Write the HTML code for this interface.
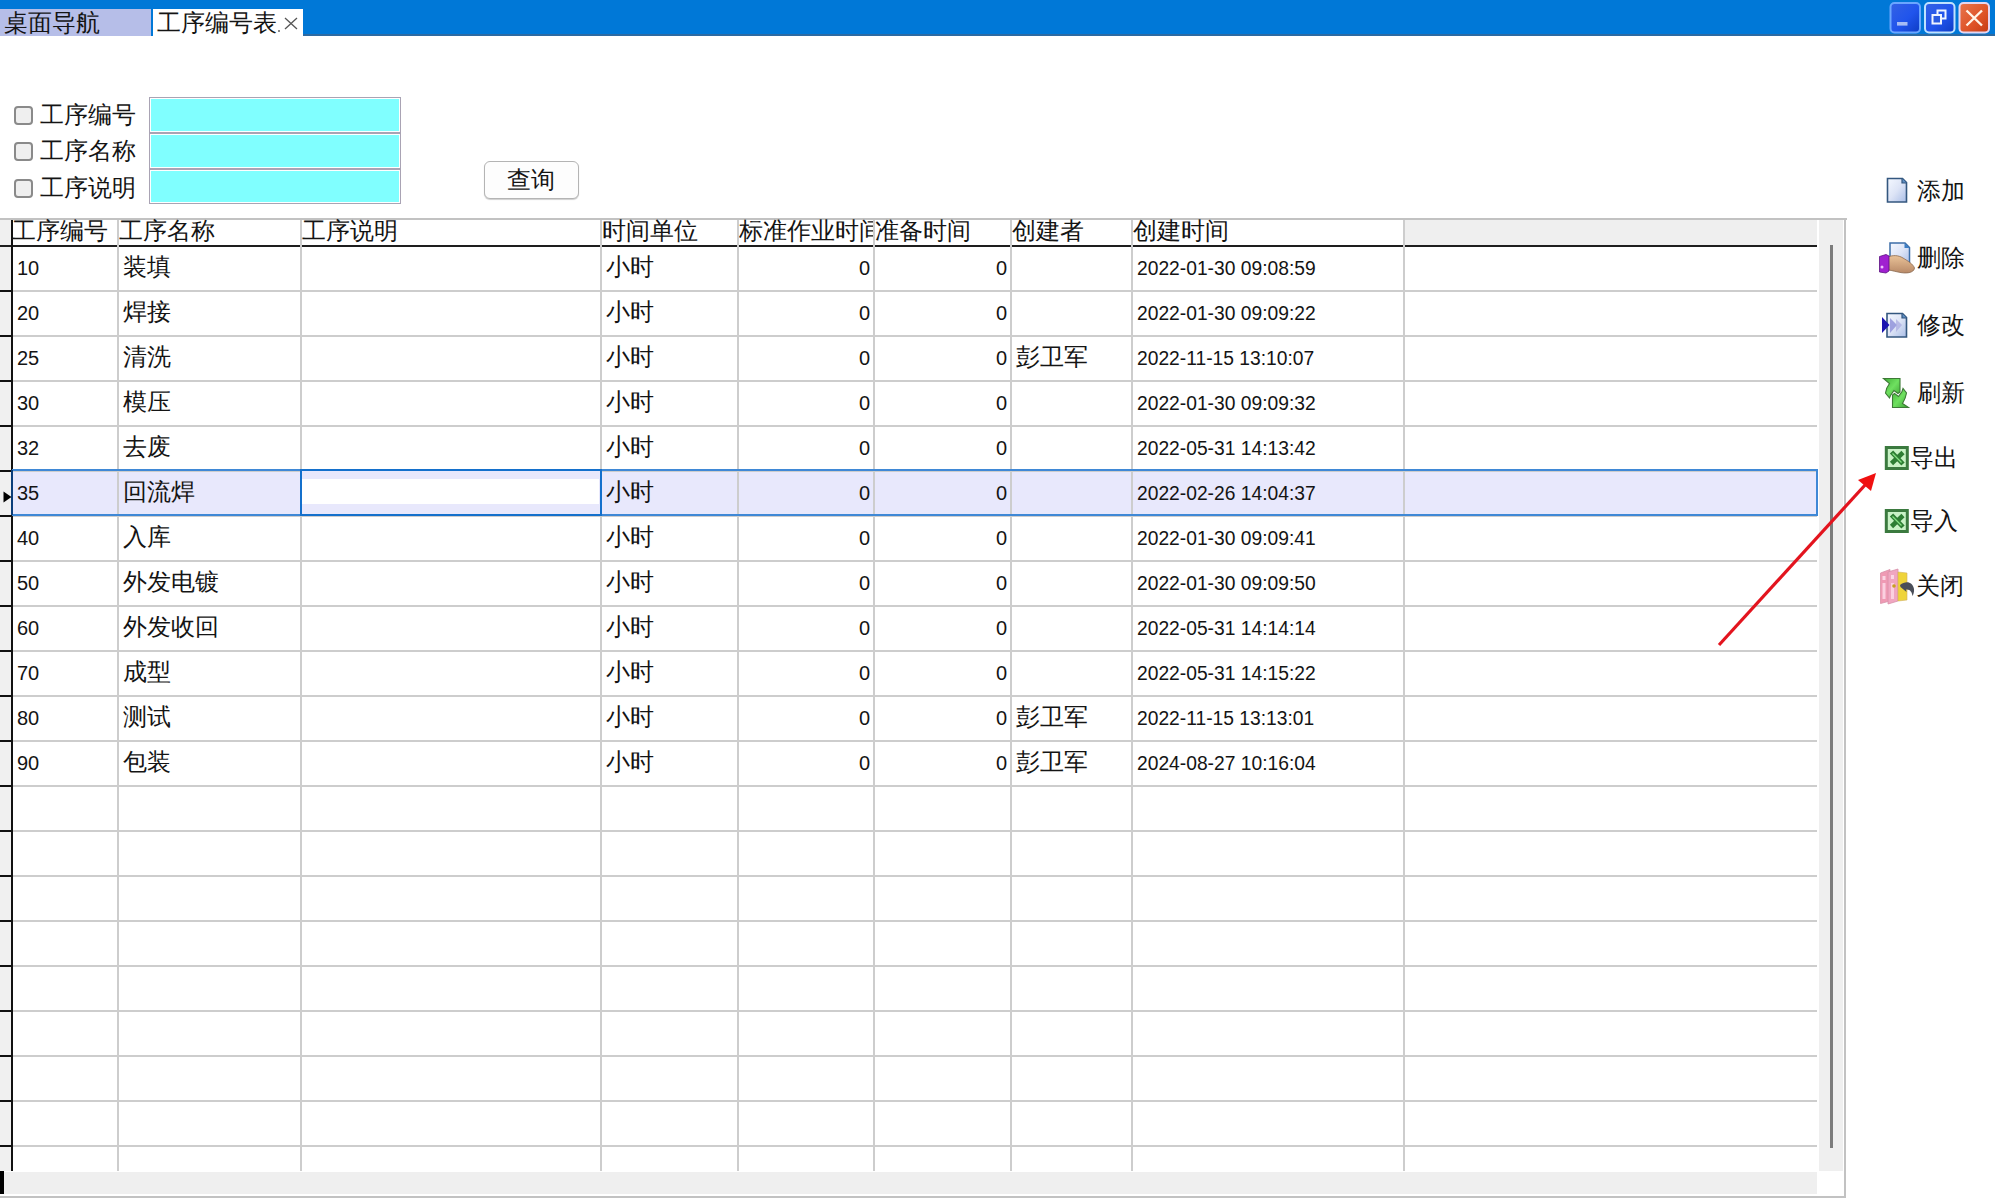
<!DOCTYPE html>
<html><head><meta charset="utf-8"><title>工序编号表</title>
<style>
*{box-sizing:border-box}
html,body{margin:0;padding:0;width:1995px;height:1200px;overflow:hidden;background:#fff}
body{position:relative;font-family:"Liberation Sans",sans-serif;color:#111}
.a{position:absolute}
.cj{font-size:24px;line-height:27px;white-space:nowrap;color:#141414}
.num{font-size:20px;line-height:27px;white-space:nowrap;color:#141414}
.hl{position:absolute;height:2px;background:#cdcdcd}
.dt{transform:scaleX(0.962);transform-origin:0 0}
.vl{position:absolute;width:2px;background:#cdcdcd}
</style></head><body>

<div class="a" style="left:0;top:0;width:1995px;height:36px;background:#0078d7"></div>
<div class="a" style="left:303px;top:34px;width:1692px;height:2px;background:#2d6aa2"></div>
<div class="a" style="left:0;top:9px;width:151px;height:27px;background:#b6bee8"></div>
<div class="a cj" style="left:4px;top:9px">桌面导航</div>
<div class="a" style="left:153px;top:9px;width:150px;height:28px;background:#fff"></div>
<div class="a cj" style="left:157px;top:9px">工序编号表</div>
<div class="a" style="left:278px;top:30px;width:2px;height:2px;background:#888"></div>
<svg class="a" style="left:284px;top:17px" width="14" height="13" viewBox="0 0 14 13"><path d="M1 1L13 12M13 1L1 12" stroke="#555" stroke-width="1.3" fill="none"/></svg>
<svg class="a" style="left:1885px;top:0px" width="110" height="36" viewBox="1885 0 110 36">
<defs>
<linearGradient id="gb" x1="0" y1="0" x2="1" y2="1"><stop offset="0" stop-color="#3462e4"/><stop offset="0.55" stop-color="#2054ec"/><stop offset="1" stop-color="#0d3cc4"/></linearGradient>
<linearGradient id="gr" x1="0" y1="0" x2="1" y2="1"><stop offset="0" stop-color="#e8764e"/><stop offset="0.6" stop-color="#de5226"/><stop offset="1" stop-color="#c43a12"/></linearGradient>
</defs>
<rect x="1890.5" y="3" width="29.5" height="29.5" rx="4" fill="url(#gb)" stroke="#6aa6ff" stroke-width="2"/>
<rect x="1897" y="22" width="10.5" height="3.6" fill="#a6bcf4"/>
<rect x="1925" y="3" width="29.5" height="29.5" rx="4" fill="url(#gb)" stroke="#bfe2ff" stroke-width="2"/>
<path d="M1937.5 14V10.5H1945.5V18.5H1941.5" fill="none" stroke="#eef4ff" stroke-width="2"/>
<rect x="1932.5" y="15" width="8.5" height="8.5" fill="#2a5ae0" stroke="#eef4ff" stroke-width="2"/>
<rect x="1959.5" y="3" width="29.5" height="29.5" rx="4" fill="url(#gr)" stroke="#e6d6f0" stroke-width="2"/>
<path d="M1966.5 10.5L1982 25.5M1982 10.5L1966.5 25.5" stroke="#fff4e8" stroke-width="2.4"/>
</svg>
<div class="a" style="left:14px;top:106px;width:19px;height:19px;border:2px solid #8a8a8a;border-radius:4px;background:#efefef"></div>
<div class="a cj" style="left:40px;top:101px">工序编号</div>
<div class="a" style="left:14px;top:142px;width:19px;height:19px;border:2px solid #8a8a8a;border-radius:4px;background:#efefef"></div>
<div class="a cj" style="left:40px;top:137px">工序名称</div>
<div class="a" style="left:14px;top:179px;width:19px;height:19px;border:2px solid #8a8a8a;border-radius:4px;background:#efefef"></div>
<div class="a cj" style="left:40px;top:174px">工序说明</div>
<div class="a" style="left:149px;top:97px;width:252px;height:36px;border:1px solid #a9a3b4;background:#80ffff;box-shadow:inset 0 0 0 1px #fff"></div>
<div class="a" style="left:149px;top:133px;width:252px;height:36px;border:1px solid #a9a3b4;background:#80ffff;box-shadow:inset 0 0 0 1px #fff"></div>
<div class="a" style="left:149px;top:169px;width:252px;height:35px;border:1px solid #a9a3b4;background:#80ffff;box-shadow:inset 0 0 0 1px #fff"></div>
<div class="a" style="left:484px;top:161px;width:95px;height:38px;border:1px solid #b4b4b4;border-radius:6px;background:#fdfdfd;box-shadow:0 1px 1px #cfcfcf"></div>
<div class="a cj" style="left:507px;top:166px">查询</div>
<div class="a" style="left:0;top:218px;width:1847px;height:2px;background:#c2c2c2"></div>
<div class="a" style="left:1844px;top:218px;width:2px;height:980px;background:#c2c2c2"></div>
<div class="a" style="left:0;top:1196px;width:1846px;height:2px;background:#c2c2c2"></div>
<div class="a" style="left:0;top:220px;width:11px;height:951px;background:#f0f0f0"></div>
<div class="a" style="left:1405px;top:220px;width:412px;height:25px;background:#efefef"></div>
<div class="a" style="left:1819px;top:220px;width:24px;height:951px;background:#efefef"></div>
<div class="a" style="left:1830px;top:245px;width:3px;height:903px;background:#7c7c7c"></div>
<div class="a" style="left:0;top:1172px;width:1817px;height:22px;background:#efefef"></div>
<div class="a" style="left:0;top:1171px;width:4px;height:23px;background:#000"></div>
<div class="a" style="left:12px;top:471px;width:1805px;height:45px;background:#e8e8fc"></div>
<div class="hl" style="left:12px;top:290px;width:1805px"></div>
<div class="a" style="left:0;top:290px;width:12px;height:2px;background:#111"></div>
<div class="hl" style="left:12px;top:335px;width:1805px"></div>
<div class="a" style="left:0;top:335px;width:12px;height:2px;background:#111"></div>
<div class="hl" style="left:12px;top:380px;width:1805px"></div>
<div class="a" style="left:0;top:380px;width:12px;height:2px;background:#111"></div>
<div class="hl" style="left:12px;top:425px;width:1805px"></div>
<div class="a" style="left:0;top:425px;width:12px;height:2px;background:#111"></div>
<div class="hl" style="left:12px;top:470px;width:1805px"></div>
<div class="a" style="left:0;top:470px;width:12px;height:2px;background:#111"></div>
<div class="hl" style="left:12px;top:515px;width:1805px"></div>
<div class="a" style="left:0;top:515px;width:12px;height:2px;background:#111"></div>
<div class="hl" style="left:12px;top:560px;width:1805px"></div>
<div class="a" style="left:0;top:560px;width:12px;height:2px;background:#111"></div>
<div class="hl" style="left:12px;top:605px;width:1805px"></div>
<div class="a" style="left:0;top:605px;width:12px;height:2px;background:#111"></div>
<div class="hl" style="left:12px;top:650px;width:1805px"></div>
<div class="a" style="left:0;top:650px;width:12px;height:2px;background:#111"></div>
<div class="hl" style="left:12px;top:695px;width:1805px"></div>
<div class="a" style="left:0;top:695px;width:12px;height:2px;background:#111"></div>
<div class="hl" style="left:12px;top:740px;width:1805px"></div>
<div class="a" style="left:0;top:740px;width:12px;height:2px;background:#111"></div>
<div class="hl" style="left:12px;top:785px;width:1805px"></div>
<div class="a" style="left:0;top:785px;width:12px;height:2px;background:#111"></div>
<div class="hl" style="left:12px;top:830px;width:1805px"></div>
<div class="a" style="left:0;top:830px;width:12px;height:2px;background:#111"></div>
<div class="hl" style="left:12px;top:875px;width:1805px"></div>
<div class="a" style="left:0;top:875px;width:12px;height:2px;background:#111"></div>
<div class="hl" style="left:12px;top:920px;width:1805px"></div>
<div class="a" style="left:0;top:920px;width:12px;height:2px;background:#111"></div>
<div class="hl" style="left:12px;top:965px;width:1805px"></div>
<div class="a" style="left:0;top:965px;width:12px;height:2px;background:#111"></div>
<div class="hl" style="left:12px;top:1010px;width:1805px"></div>
<div class="a" style="left:0;top:1010px;width:12px;height:2px;background:#111"></div>
<div class="hl" style="left:12px;top:1055px;width:1805px"></div>
<div class="a" style="left:0;top:1055px;width:12px;height:2px;background:#111"></div>
<div class="hl" style="left:12px;top:1100px;width:1805px"></div>
<div class="a" style="left:0;top:1100px;width:12px;height:2px;background:#111"></div>
<div class="hl" style="left:12px;top:1145px;width:1805px"></div>
<div class="a" style="left:0;top:1145px;width:12px;height:2px;background:#111"></div>
<div class="a" style="left:0;top:245px;width:1817px;height:2px;background:#1e1e1e"></div>
<div class="vl" style="left:117px;top:220px;height:951px"></div>
<div class="vl" style="left:300px;top:220px;height:951px"></div>
<div class="vl" style="left:600px;top:220px;height:951px"></div>
<div class="vl" style="left:737px;top:220px;height:951px"></div>
<div class="vl" style="left:873px;top:220px;height:951px"></div>
<div class="vl" style="left:1010px;top:220px;height:951px"></div>
<div class="vl" style="left:1131px;top:220px;height:951px"></div>
<div class="vl" style="left:1403px;top:220px;height:951px"></div>
<div class="a" style="left:11px;top:220px;width:2px;height:951px;background:#111"></div>
<div class="a" style="left:12px;top:469px;width:1806px;height:2px;background:#3f88d6"></div>
<div class="a" style="left:12px;top:514px;width:1806px;height:2px;background:#3f88d6"></div>
<div class="a" style="left:1816px;top:469px;width:2px;height:47px;background:#3f88d6"></div>
<div class="a" style="left:11px;top:470px;width:2px;height:45px;background:#0a3d7a"></div>
<div class="a" style="left:300px;top:469px;width:302px;height:47px;border:2px solid #1470cc;background:#e8e8fc"></div>
<div class="a" style="left:302px;top:479px;width:297px;height:25px;background:#fff"></div>
<svg class="a" style="left:3px;top:491px" width="9" height="12" viewBox="0 0 9 12"><path d="M0.5 0.5L8.5 6L0.5 11.5Z" fill="#000"/></svg>
<div class="a cj" style="left:12px;top:217px;width:105px;overflow:hidden">工序编号</div>
<div class="a cj" style="left:119px;top:217px;width:181px;overflow:hidden">工序名称</div>
<div class="a cj" style="left:302px;top:217px;width:298px;overflow:hidden">工序说明</div>
<div class="a cj" style="left:602px;top:217px;width:135px;overflow:hidden">时间单位</div>
<div class="a cj" style="left:739px;top:217px;width:134px;overflow:hidden">标准作业时间</div>
<div class="a cj" style="left:875px;top:217px;width:135px;overflow:hidden">准备时间</div>
<div class="a cj" style="left:1012px;top:217px;width:119px;overflow:hidden">创建者</div>
<div class="a cj" style="left:1133px;top:217px;width:270px;overflow:hidden">创建时间</div>
<div class="a num" style="left:17px;top:255px">10</div>
<div class="a cj" style="left:123px;top:253px">装填</div>
<div class="a cj" style="left:606px;top:253px">小时</div>
<div class="a num" style="left:739px;top:255px;width:131px;text-align:right">0</div>
<div class="a num" style="left:875px;top:255px;width:132px;text-align:right">0</div>
<div class="a num dt" style="left:1137px;top:255px">2022-01-30 09:08:59</div>
<div class="a num" style="left:17px;top:300px">20</div>
<div class="a cj" style="left:123px;top:298px">焊接</div>
<div class="a cj" style="left:606px;top:298px">小时</div>
<div class="a num" style="left:739px;top:300px;width:131px;text-align:right">0</div>
<div class="a num" style="left:875px;top:300px;width:132px;text-align:right">0</div>
<div class="a num dt" style="left:1137px;top:300px">2022-01-30 09:09:22</div>
<div class="a num" style="left:17px;top:345px">25</div>
<div class="a cj" style="left:123px;top:343px">清洗</div>
<div class="a cj" style="left:606px;top:343px">小时</div>
<div class="a num" style="left:739px;top:345px;width:131px;text-align:right">0</div>
<div class="a num" style="left:875px;top:345px;width:132px;text-align:right">0</div>
<div class="a cj" style="left:1016px;top:343px">彭卫军</div>
<div class="a num dt" style="left:1137px;top:345px">2022-11-15 13:10:07</div>
<div class="a num" style="left:17px;top:390px">30</div>
<div class="a cj" style="left:123px;top:388px">模压</div>
<div class="a cj" style="left:606px;top:388px">小时</div>
<div class="a num" style="left:739px;top:390px;width:131px;text-align:right">0</div>
<div class="a num" style="left:875px;top:390px;width:132px;text-align:right">0</div>
<div class="a num dt" style="left:1137px;top:390px">2022-01-30 09:09:32</div>
<div class="a num" style="left:17px;top:435px">32</div>
<div class="a cj" style="left:123px;top:433px">去废</div>
<div class="a cj" style="left:606px;top:433px">小时</div>
<div class="a num" style="left:739px;top:435px;width:131px;text-align:right">0</div>
<div class="a num" style="left:875px;top:435px;width:132px;text-align:right">0</div>
<div class="a num dt" style="left:1137px;top:435px">2022-05-31 14:13:42</div>
<div class="a num" style="left:17px;top:480px">35</div>
<div class="a cj" style="left:123px;top:478px">回流焊</div>
<div class="a cj" style="left:606px;top:478px">小时</div>
<div class="a num" style="left:739px;top:480px;width:131px;text-align:right">0</div>
<div class="a num" style="left:875px;top:480px;width:132px;text-align:right">0</div>
<div class="a num dt" style="left:1137px;top:480px">2022-02-26 14:04:37</div>
<div class="a num" style="left:17px;top:525px">40</div>
<div class="a cj" style="left:123px;top:523px">入库</div>
<div class="a cj" style="left:606px;top:523px">小时</div>
<div class="a num" style="left:739px;top:525px;width:131px;text-align:right">0</div>
<div class="a num" style="left:875px;top:525px;width:132px;text-align:right">0</div>
<div class="a num dt" style="left:1137px;top:525px">2022-01-30 09:09:41</div>
<div class="a num" style="left:17px;top:570px">50</div>
<div class="a cj" style="left:123px;top:568px">外发电镀</div>
<div class="a cj" style="left:606px;top:568px">小时</div>
<div class="a num" style="left:739px;top:570px;width:131px;text-align:right">0</div>
<div class="a num" style="left:875px;top:570px;width:132px;text-align:right">0</div>
<div class="a num dt" style="left:1137px;top:570px">2022-01-30 09:09:50</div>
<div class="a num" style="left:17px;top:615px">60</div>
<div class="a cj" style="left:123px;top:613px">外发收回</div>
<div class="a cj" style="left:606px;top:613px">小时</div>
<div class="a num" style="left:739px;top:615px;width:131px;text-align:right">0</div>
<div class="a num" style="left:875px;top:615px;width:132px;text-align:right">0</div>
<div class="a num dt" style="left:1137px;top:615px">2022-05-31 14:14:14</div>
<div class="a num" style="left:17px;top:660px">70</div>
<div class="a cj" style="left:123px;top:658px">成型</div>
<div class="a cj" style="left:606px;top:658px">小时</div>
<div class="a num" style="left:739px;top:660px;width:131px;text-align:right">0</div>
<div class="a num" style="left:875px;top:660px;width:132px;text-align:right">0</div>
<div class="a num dt" style="left:1137px;top:660px">2022-05-31 14:15:22</div>
<div class="a num" style="left:17px;top:705px">80</div>
<div class="a cj" style="left:123px;top:703px">测试</div>
<div class="a cj" style="left:606px;top:703px">小时</div>
<div class="a num" style="left:739px;top:705px;width:131px;text-align:right">0</div>
<div class="a num" style="left:875px;top:705px;width:132px;text-align:right">0</div>
<div class="a cj" style="left:1016px;top:703px">彭卫军</div>
<div class="a num dt" style="left:1137px;top:705px">2022-11-15 13:13:01</div>
<div class="a num" style="left:17px;top:750px">90</div>
<div class="a cj" style="left:123px;top:748px">包装</div>
<div class="a cj" style="left:606px;top:748px">小时</div>
<div class="a num" style="left:739px;top:750px;width:131px;text-align:right">0</div>
<div class="a num" style="left:875px;top:750px;width:132px;text-align:right">0</div>
<div class="a cj" style="left:1016px;top:748px">彭卫军</div>
<div class="a num dt" style="left:1137px;top:750px">2024-08-27 10:16:04</div>
<div class="a cj" style="left:1917px;top:177px">添加</div>
<div class="a cj" style="left:1917px;top:244px">删除</div>
<div class="a cj" style="left:1917px;top:311px">修改</div>
<div class="a cj" style="left:1917px;top:379px">刷新</div>
<div class="a cj" style="left:1910px;top:444px">导出</div>
<div class="a cj" style="left:1910px;top:507px">导入</div>
<div class="a cj" style="left:1916px;top:572px">关闭</div>
<svg class="a" style="left:1870px;top:160px" width="60" height="460" viewBox="1870 160 60 460">
<defs>
<linearGradient id="pg" x1="0" y1="0" x2="1" y2="1"><stop offset="0" stop-color="#f4f8ff"/><stop offset="0.5" stop-color="#dde4f6"/><stop offset="1" stop-color="#a9bde6"/></linearGradient>
<linearGradient id="grn" x1="0" y1="0" x2="1" y2="1"><stop offset="0" stop-color="#3fae36"/><stop offset="0.5" stop-color="#6fe060"/><stop offset="1" stop-color="#3aa232"/></linearGradient>
<linearGradient id="skin" x1="0" y1="0" x2="0" y2="1"><stop offset="0" stop-color="#e9c298"/><stop offset="1" stop-color="#b98a68"/></linearGradient>
</defs>
<!-- add -->
<path d="M1887.5 178.5H1902.5L1906.5 182.5V202H1887.5Z" fill="url(#pg)" stroke="#34577f" stroke-width="1.6"/>
<path d="M1902 178.5V183H1906.5" fill="#5c8ec4" stroke="#34577f" stroke-width="1.2"/>
<!-- delete -->
<path d="M1890 243H1905L1909.5 247.5V265H1890Z" fill="url(#pg)" stroke="#3d6ea8" stroke-width="1.5"/>
<path d="M1904.5 243V248H1909.5Z" fill="#3d7ec4"/>
<path d="M1888 257C1893 255 1898 255 1903 258C1908 261 1913 264 1914.5 268C1914 273 1906 274 1898 272C1893 271 1890 270 1888 270Z" fill="url(#skin)" stroke="#8a6a50" stroke-width="0.8"/>
<path d="M1879.5 256.5L1886 254.5L1889 256V271L1886 273L1879.5 272Z" fill="#a020d0" stroke="#5a1080" stroke-width="0.8"/>
<circle cx="1882" cy="267" r="1.5" fill="#f0c0ff"/>
<!-- edit -->
<path d="M1887 313.5H1902.5L1906.5 317.5V337H1887Z" fill="url(#pg)" stroke="#34577f" stroke-width="1.6"/>
<path d="M1902 313.5V318H1906.5" fill="#5c8ec4" stroke="#34577f" stroke-width="1.2"/>
<path d="M1890 318L1897 325L1890 333Z" fill="#8c8ed8" opacity="0.8"/>
<path d="M1896 319L1902 325L1896 332Z" fill="#a8aae0" opacity="0.7"/>
<path d="M1882 317L1889.5 325L1882 333Z" fill="#1a14b0"/>
<!-- refresh -->
<path d="M1883.5 378.5H1900V392L1898 393.5L1894 390.5L1890.5 395.5L1889.5 398L1885.5 393C1886 389 1887.5 386 1889.5 383.5Z" fill="url(#grn)" stroke="#3d7a36" stroke-width="1.1"/>
<path d="M1908.5 407.5H1892.5V395L1894.5 393.5L1898.5 396.5L1902 391.5L1903 388.5L1906.5 393C1906 397 1904.5 400 1902.5 403.5Z" fill="url(#grn)" stroke="#3d7a36" stroke-width="1.1"/>
<!-- excel export / import -->
<g id="xl">
<rect x="1886.3" y="447.5" width="21" height="21" fill="#c9f2c6" stroke="#3b7a3f" stroke-width="3"/>
<path d="M1891.5 452L1903 464M1903 452.5L1891.5 463.5" stroke="#2e7e34" stroke-width="4.6"/>
<path d="M1892.5 453.5L1901.5 462.5" stroke="#86e284" stroke-width="1.2"/>
</g>
<use href="#xl" transform="translate(0 63)"/>
<!-- close door -->
<path d="M1880.5 573L1890 569.5V601L1880.5 603.5Z" fill="#ef9ab4" stroke="#d890a8" stroke-width="0.8"/>
<path d="M1888 572L1898 569V601L1888 604Z" fill="#f0a6c0" stroke="#d890a8" stroke-width="0.8"/>
<rect x="1882.5" y="576" width="3" height="4" fill="#fbd6e4"/>
<rect x="1882.5" y="583" width="3" height="16" fill="#fbd0e0"/>
<rect x="1891" y="575" width="3" height="4" fill="#fbd6e4"/>
<rect x="1891" y="583" width="3" height="16" fill="#fbd0e0"/>
<circle cx="1894" cy="586" r="1.8" fill="#c8a020"/>
<path d="M1898 572L1907 573V600L1898 601Z" fill="#efd43a" stroke="#d0b060" stroke-width="0.6"/>
<path d="M1900 585C1906 580 1913 582 1914 589C1914.5 592 1913 595 1912.5 596C1912 592 1910 589 1906 589.5L1906.5 592L1900.5 587Z" fill="#4a4e58"/>
</svg>
<svg class="a" style="left:0;top:0" width="1995" height="1200" viewBox="0 0 1995 1200"><path d="M1719 645L1866 484" stroke="#e3141e" stroke-width="3.2" fill="none"/><path d="M1876 473L1858 480L1871 491Z" fill="#f01010"/></svg>
</body></html>
